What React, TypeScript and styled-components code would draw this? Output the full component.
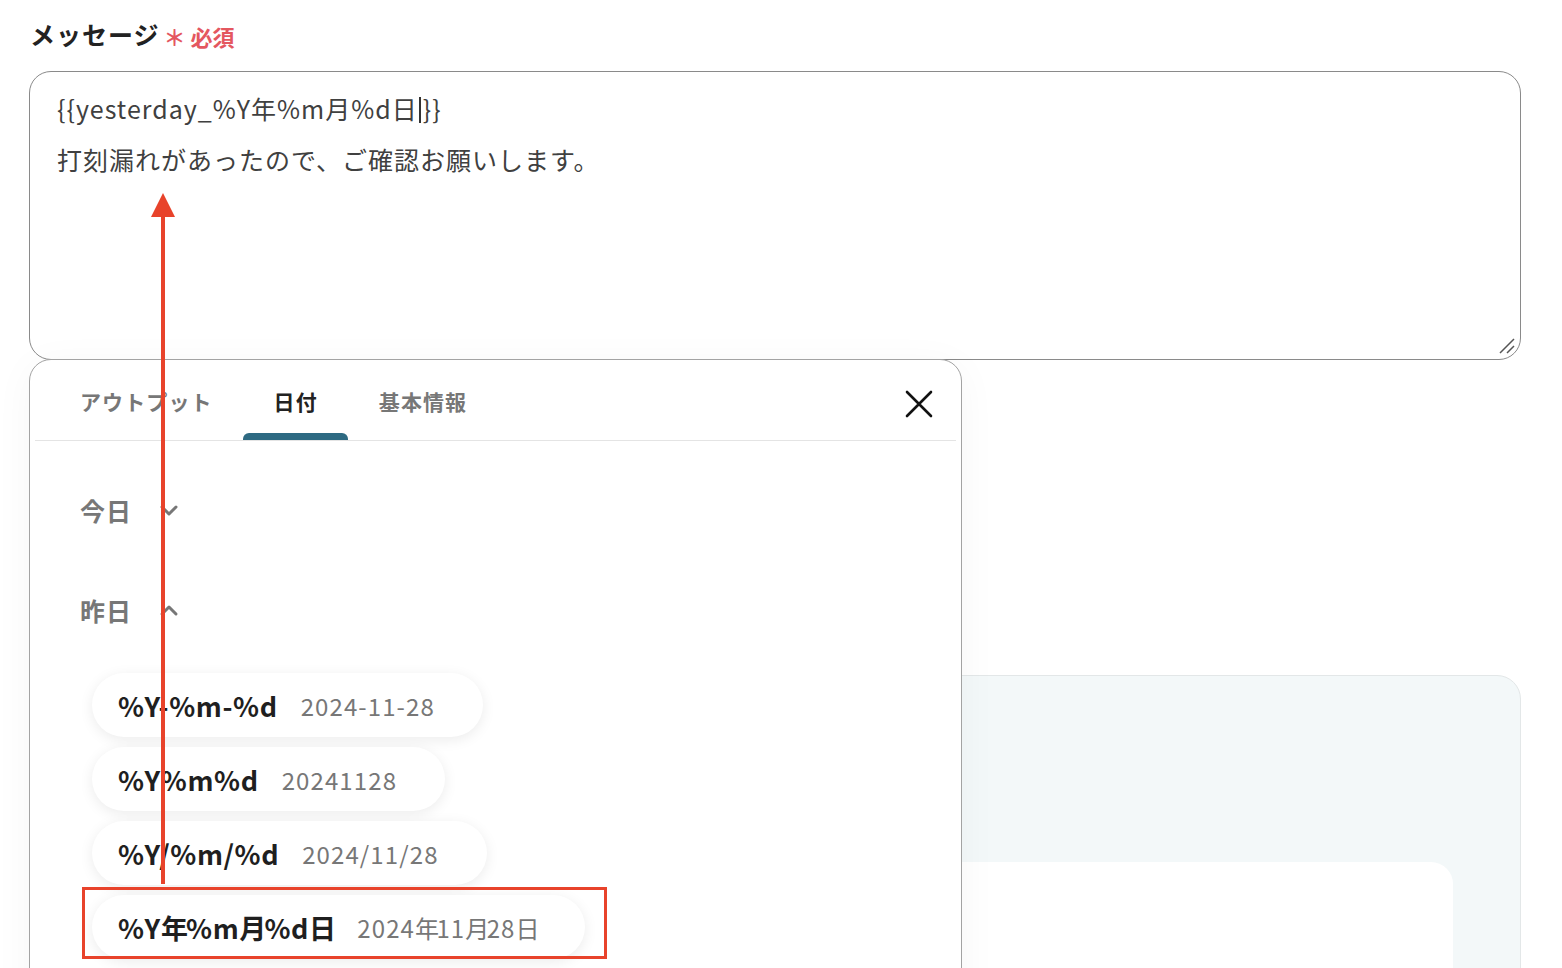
import React from "react";
import styled, { createGlobalStyle } from "styled-components";

const GlobalStyle = createGlobalStyle`
  html, body {
    margin: 0;
    padding: 0;
    background: #ffffff;
  }
  body {
    font-family: "Noto Sans CJK JP", "Noto Sans", sans-serif;
    overflow: hidden;
  }
`;

const Page = styled.div`
  position: relative;
  width: 1562px;
  height: 968px;
  overflow: hidden;
  padding: 16px 41px 0 29px;
  box-sizing: border-box;
`;

const Label = styled.div`
  display: flex;
  align-items: center;
  gap: 4px;
  height: 36px;
  margin-bottom: 19px;
  padding-left: 1px;
  font-size: 25px;
  letter-spacing: 1px;
  font-weight: 700;
  color: #222;
`;

const Required = styled.span`
  color: #e4575f;
  font-size: 22px;
  letter-spacing: 0;
  font-weight: 700;
  padding-top: 3px;
`;

// message input
const MessageBox = styled.div`
  position: relative;
  height: 289px;
  box-sizing: border-box;
  border: 1px solid #8a8a8a;
  border-radius: 22px;
  padding: 11px 27px;
  font-size: 25px;
  letter-spacing: 1px;
  line-height: 51px;
  color: #404040;
`;

const Caret = styled.span`
  display: inline-block;
  width: 2px;
  height: 26px;
  margin: 0 2px 0 1px;
  background: #333;
  vertical-align: -4px;
`;

const ResizeHandle = styled.svg`
  position: absolute;
  right: 3px;
  bottom: 3px;
`;

// content behind the dropdown
const PreviewPanel = styled.div`
  margin-top: 315px;
  height: 400px;
  box-sizing: border-box;
  background: #f3f8f9;
  border: 1px solid #e3e7e8;
  border-radius: 24px 24px 0 0;
  padding: 186px 67px 0 67px;
`;

const PreviewCard = styled.div`
  height: 220px;
  background: #ffffff;
  border-radius: 22px 22px 0 0;
`;

// dropdown
const Popup = styled.div`
  position: absolute;
  left: 29px;
  top: 359px;
  width: 933px;
  height: 700px;
  box-sizing: border-box;
  background: #ffffff;
  border: 1.5px solid #a3a3a3;
  border-radius: 22px 22px 0 0;
  box-shadow: 0 6px 40px rgba(0, 0, 0, 0.04);
  z-index: 2;
`;

const TabBar = styled.div`
  display: flex;
  align-items: stretch;
  height: 80px;
  margin: 0 5px;
  padding-left: 14px;
  border-bottom: 1px solid #e4e4e4;
`;

const Tab = styled.div<{ $active?: boolean }>`
  position: relative;
  display: flex;
  align-items: center;
  padding: 2px 30px 0 31px;
  font-size: 21px;
  letter-spacing: 1.1px;
  font-weight: 700;
  color: ${(p) => (p.$active ? "#222" : "#777")};

  &::after {
    content: "";
    display: ${(p) => (p.$active ? "block" : "none")};
    position: absolute;
    left: 0;
    right: 0;
    bottom: 0;
    height: 7px;
    border-radius: 6px 6px 0 0;
    background: #2e6a82;
  }
`;

const CloseButton = styled.div`
  margin-left: auto;
  margin-right: 23px;
  display: flex;
  align-items: center;
  padding-top: 8px;
`;

const Content = styled.div`
  padding: 19px 0 0 50px;
`;

const GroupHeader = styled.div`
  display: flex;
  align-items: center;
  gap: 27px;
  height: 100px;
  font-size: 25px;
  letter-spacing: 1px;
  font-weight: 700;
  color: #777;
`;

const PillList = styled.div`
  display: flex;
  flex-direction: column;
  align-items: flex-start;
  gap: 10px;
  margin-top: 13px;
  padding-left: 12px;
`;

const Pill = styled.div`
  display: inline-flex;
  align-items: center;
  gap: 23px;
  height: 64px;
  padding: 0 48px 0 26px;
  border-radius: 32px;
  background: #ffffff;
  box-shadow: 0 3px 14px rgba(0, 0, 0, 0.08);
`;

const Code = styled.span`
  font-size: 27px;
  letter-spacing: 0.6px;
  font-weight: 700;
  color: #1f1f1f;
`;

const Sample = styled.span`
  font-size: 24px;
  letter-spacing: 1.1px;
  color: #777;
`;

// kanji inside the formats sit tighter than the latin letters
const Kanji = styled.span<{ $tight: number }>`
  letter-spacing: ${(p) => p.$tight}px;
`;

// annotations
const Highlight = styled.div`
  position: absolute;
  left: 82px;
  top: 887px;
  width: 525px;
  height: 72px;
  box-sizing: border-box;
  border: 3px solid #e8432b;
  z-index: 3;
`;

const ArrowLayer = styled.svg`
  position: absolute;
  left: 0;
  top: 0;
  pointer-events: none;
  z-index: 4;
`;

const Chevron: React.FC<{ up?: boolean }> = ({ up }) => (
  <svg width="20" height="20" viewBox="0 0 20 20">
    <path
      d={up ? "M3 14 L10 7 L17 14" : "M3 7 L10 14 L17 7"}
      fill="none"
      stroke="#777"
      strokeWidth="3"
      strokeLinecap="round"
      strokeLinejoin="round"
    />
  </svg>
);

const splitKanji = (text: string, tight: number) =>
  text.split(/([年月日])/).map((part, i) =>
    /^[年月日]$/.test(part) ? (
      <Kanji key={i} $tight={tight}>
        {part}
      </Kanji>
    ) : (
      part
    )
  );

const formats = [
  { code: "%Y-%m-%d", sample: "2024-11-28" },
  { code: "%Y%m%d", sample: "20241128" },
  { code: "%Y/%m/%d", sample: "2024/11/28" },
  { code: "%Y年%m月%d日", sample: "2024年11月28日" },
];

const App: React.FC = () => {
  return (
    <>
      <GlobalStyle />
      <Page>
        <Label>
          メッセージ
          <Required>＊ 必須</Required>
        </Label>

        <MessageBox>
          <div>
            {"{{yesterday_%Y年%m月%d日"}
            <Caret />
            {"}}"}
          </div>
          <div>打刻漏れがあったので、ご確認お願いします。</div>
          <ResizeHandle width="20" height="20" viewBox="0 0 20 20">
            <path d="M3 17 L17 3 M10 17 L17 10" stroke="#555" strokeWidth="1.5" />
          </ResizeHandle>
        </MessageBox>

        <PreviewPanel>
          <PreviewCard />
        </PreviewPanel>

        <Popup>
          <TabBar>
            <Tab>アウトプット</Tab>
            <Tab $active>日付</Tab>
            <Tab>基本情報</Tab>
            <CloseButton>
              <svg width="28" height="28" viewBox="0 0 28 28">
                <path d="M2 2 L26 26 M26 2 L2 26" stroke="#111" strokeWidth="2.6" strokeLinecap="round" />
              </svg>
            </CloseButton>
          </TabBar>

          <Content>
            <GroupHeader>
              今日
              <Chevron />
            </GroupHeader>
            <GroupHeader>
              昨日
              <Chevron up />
            </GroupHeader>
            <PillList>
              {formats.map((f) => (
                <Pill key={f.code}>
                  <Code>{splitKanji(f.code, -1.8)}</Code>
                  <Sample>{splitKanji(f.sample, -2.6)}</Sample>
                </Pill>
              ))}
            </PillList>
          </Content>
        </Popup>

        <Highlight />

        <ArrowLayer width="1562" height="968" viewBox="0 0 1562 968">
          <line x1="163" y1="884" x2="163" y2="212" stroke="#e8432b" strokeWidth="4" />
          <polygon points="163,193 151,217 175,217" fill="#e8432b" />
        </ArrowLayer>
      </Page>
    </>
  );
};

export default App;
